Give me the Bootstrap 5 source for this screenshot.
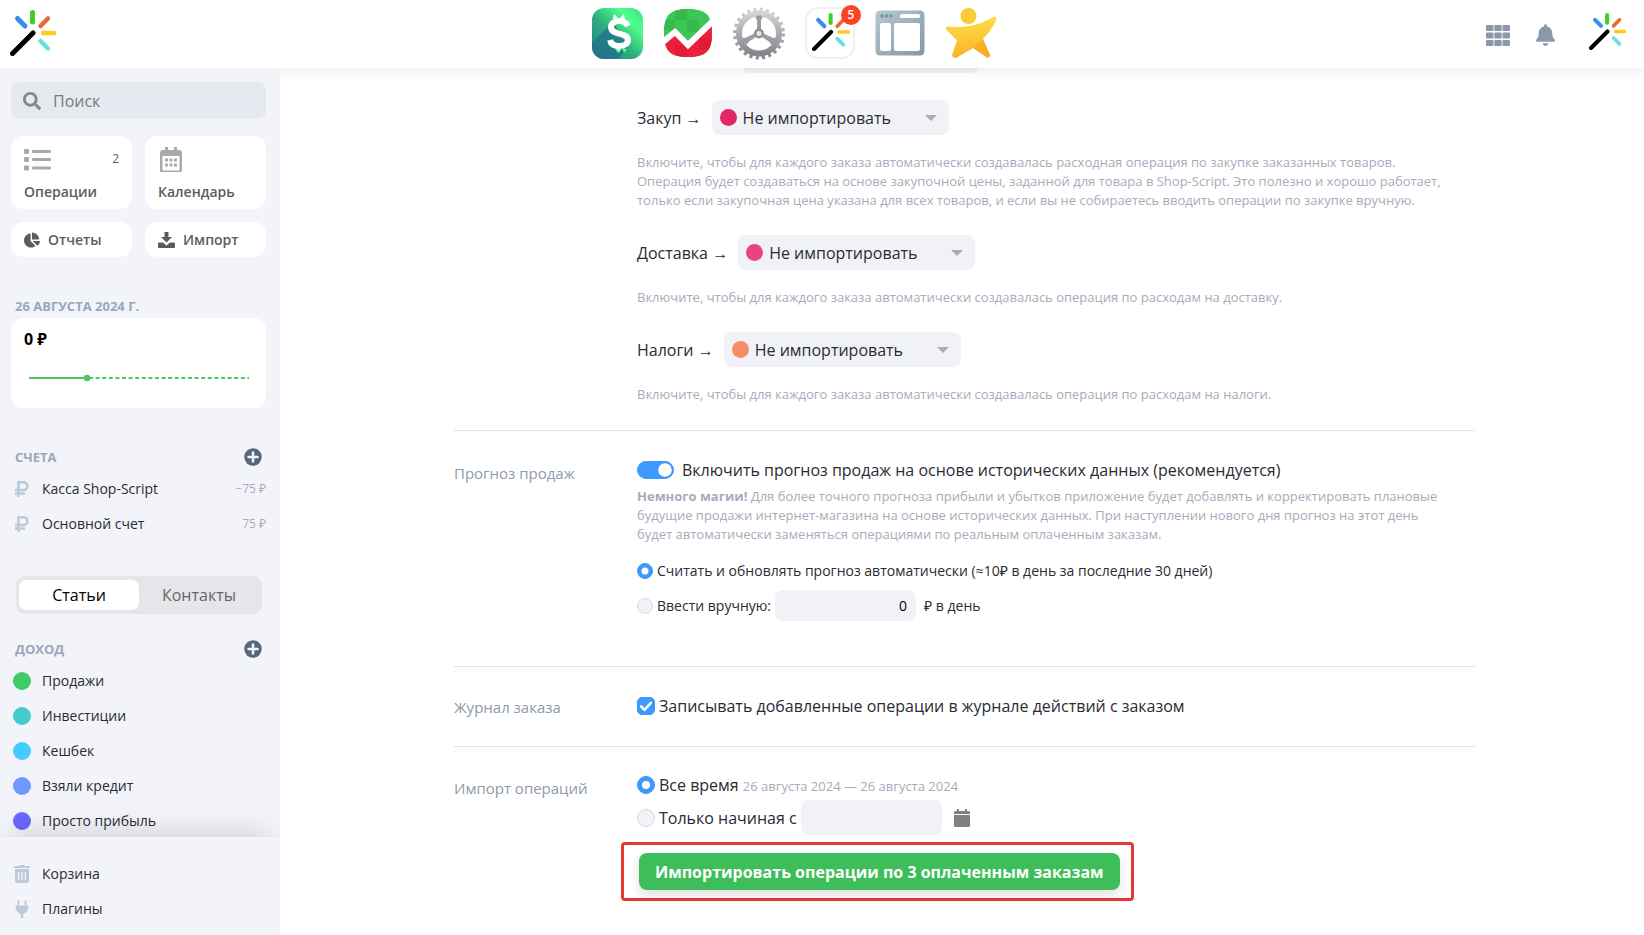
<!DOCTYPE html>
<html lang="ru">
<head>
<meta charset="utf-8">
<meta name="viewport" content="width=device-width, initial-scale=1">
<title>Импорт операций</title>
<link href="https://cdn.jsdelivr.net/npm/bootstrap@5.3.0/dist/css/bootstrap.min.css" rel="stylesheet">
<style>
  body { font-family: "Open Sans", "Noto Sans", sans-serif; font-size: 16px; line-height: 24px; color: #2b2b33; background: #fff; }
  a { color: inherit; text-decoration: none; }
  svg { flex: none; display: block; }

  .topbar { height: 68px; z-index: 10; padding-bottom: 2px; box-shadow: 0 0 16px rgba(0,0,0,.1); }
  .topbar-start { width: 105px; padding-left: 6px; }
  .topbar-apps { gap: 20px; }
  .topbar-end { width: 160px; padding: 4px 0 0 2px; gap: 26px; color: #8999ab; }
  .app-badge { top: -2px; right: -6px; width: 20px; height: 20px; border-radius: 50%; background: #fa4524; color: #fff; font-size: 12px; font-weight: 600; line-height: 20px; text-align: center; }

  .side { width: 280px; height: calc(100vh - 68px); top: 68px; background: #f3f4fa; font-size: 14px; }
  .side-scroll { padding: 14px 14px 0 11px; }
  .side-search { height: 37px; gap: 12px; border-radius: 8px; background: #e6e9f0; padding: 0 12px; color: #888; }
  .side-search input { border: 0; background: none; outline: 0; font-size: 16px; color: #333; }
  .side-search input::placeholder { color: #777a80; }
  .tiles { display: grid; grid-template-columns: 1fr 1fr; gap: 13px; margin-top: 17px; color: #5c5c60; font-weight: 600; }
  .tile { background: #fff; border-radius: 12px; padding: 0 13px; }
  .tile-tall { height: 73px; padding-top: 10px; }
  .tile-short { height: 35px; }
  .tile-count { font-size: 12px; font-weight: 400; line-height: 24px; }
  .side-head { font-size: 13px; font-weight: 700; line-height: 20px; color: #99a7bb; text-transform: uppercase; padding: 0 5px 0 4px; margin: 0; }
  .balance { background: #fff; border-radius: 12px; height: 90px; padding: 9px 13px; color: #000; font-size: 16px; font-weight: 700; }
  .side-row { height: 35px; padding-left: 1px; }
  .side-row-icon { width: 20px; margin-right: 10px; color: #bccada; display: flex; justify-content: center; }
  .side-sum { font-size: 12px; color: #a9a9bb; }
  .dot { display: block; width: 18px; height: 18px; border-radius: 50%; }
  .segmented { height: 38px; margin: 35px 4px 0 5px; padding: 4px 3px; background: #e5e6ea; border-radius: 9px; }
  .segmented button { border: 0; background: none; border-radius: 7px; font-size: 16px; line-height: 20px; color: #666; flex: 1; }
  .segmented button.active { background: #fff; color: #000; }
  .side-foot { padding: 19px 14px 9px 11px; background: #f3f4fa; box-shadow: 0 -14px 28px -10px rgba(0,0,0,.14); clip-path: inset(-60px 0 0 0); }

  .settings { max-width: 1026px; padding: 0 0 32px 5px; }
  .section { border-bottom: 1px solid #e3e3e6; }
  .section:last-child { border-bottom: 0; }
  .section-name { width: 183px; flex: none; font-size: 15px; color: #8d9bab; padding-top: 3px; }
  .pick-line { gap: 10px; }
  .pick { width: 237px; height: 35px; }
  .pick select { width: 100%; height: 100%; border: 0; border-radius: 8px; background: #f1f2f7; appearance: none; padding: 0 40px 0 31px; font-size: 16px; color: #2b2b33; }
  .pick .dot { position: absolute; left: 8px; top: 9px; width: 17px; height: 17px; pointer-events: none; }
  .pick::after { content: ""; position: absolute; right: 12px; top: 15px; border: 6px solid transparent; border-top-color: #aaaabb; border-bottom: 0; }
  .pick-clipped { margin: -30px 0 27px 105px; }
  .hint { font-size: 13px; line-height: 19px; color: #aaaabb; margin: 0; max-width: 812px; }
  .pick-hint { margin: 18px 0 25px; }
  .form-check-input { margin: 0; border-color: #d9dae3; background-color: #f1f2f7; flex: none; }
  .form-check-input:checked { background-color: #3d99fd; border-color: #3d99fd; }
  .mark-md { width: 18px; height: 18px; }
  .mark-sm { width: 16px; height: 16px; }
  input[type=checkbox].mark-md { border-radius: 5px; }
  .form-check-input[type=checkbox].mark-md:checked { background-image: url("data:image/svg+xml,%3csvg xmlns='http://www.w3.org/2000/svg' viewBox='0 0 18 18'%3e%3cpath d='M3.500 9.500l3.800 3.800L14.500 5.500' fill='none' stroke='%23fff' stroke-width='2.800' stroke-linecap='round' stroke-linejoin='round'/%3e%3c/svg%3e"); }
  .form-switch .form-check-input { width: 37px; height: 18px; margin: 0; float: none; }
  .form-switch .form-check-input, .form-switch .form-check-input:checked { --bs-form-switch-bg: url("data:image/svg+xml,%3csvg xmlns='http://www.w3.org/2000/svg' viewBox='-4 -4 8 8'%3e%3ccircle r='3.4' fill='%23fff'/%3e%3c/svg%3e"); }
  .fill { border: 0; background: #f1f2f7; border-radius: 8px; width: 141px; height: 35px; padding: 0 9px; }
  .fill-sm { height: 31px; font-size: 14px; text-align: right; }
  .text-md { font-size: 14px; }
  .callout { border: 3px solid #e5392f; border-radius: 4px; padding: 8px 11px 8px 15px; margin: 7px 0 0 -16px; }
  .btn-import { height: 37px; border-radius: 8px; background: #3dbe5a; color: #fff; font-weight: 700; font-size: 16px; line-height: 24px; padding: 0 16px; border: 0; box-shadow: 0 5px 12px rgba(0,0,0,.13); }
  .btn-import:hover { background: #35ad50; color: #fff; }
</style>
</head>
<body>

<svg width="0" height="0" class="position-absolute" aria-hidden="true">
  <defs>
    <linearGradient id="gMoney" x1="0" y1="1" x2="1" y2="0"><stop offset="0" stop-color="#23788a"/><stop offset=".45" stop-color="#2fae81"/><stop offset=".75" stop-color="#4dff88"/><stop offset="1" stop-color="#3ddd83"/></linearGradient>
    <linearGradient id="gGear" x1="0" y1="0" x2="0" y2="1"><stop offset="0" stop-color="#d2d2d4"/><stop offset="1" stop-color="#85858c"/></linearGradient>
    <linearGradient id="gWin" x1="0" y1="0" x2="1" y2="1"><stop offset="0" stop-color="#b4cad2"/><stop offset="1" stop-color="#8497a5"/></linearGradient>
    <linearGradient id="gStar" x1="0" y1="0" x2="0" y2="1"><stop offset="0" stop-color="#fde047"/><stop offset="1" stop-color="#f9b22a"/></linearGradient>
    <clipPath id="cSquircle"><path d="M25 1C43 1 49 7 49 25S43 49 25 49 1 43 1 25 7 1 25 1z"/></clipPath>
    <clipPath id="cMoney"><rect width="51" height="51" rx="12"/></clipPath>
    <symbol id="wand" viewBox="0 0 46 46">
      <g fill="none" stroke-linecap="round" stroke-width="4">
        <path d="M2.500 43.500L23 23" stroke="#000" stroke-width="5"/>
        <path d="M22.500 2.500V12" stroke="#44cc28" stroke-width="5"/>
        <path d="M7.500 8.500L15 16" stroke="#348eee" stroke-width="5"/>
        <path d="M38 8.500L30.500 16" stroke="#e66c34" stroke-width="4.500"/>
        <path d="M33 23H44" stroke="#fbcc1e" stroke-width="4.500"/>
        <path d="M30.500 31L38 38.500" stroke="#69dfdc" stroke-width="4.500"/>
      </g>
    </symbol>
    <symbol id="plus" viewBox="0 0 18 18"><circle cx="9" cy="9" r="8.700" fill="#556677"/><path d="M9 4.500v9M4.500 9h9" stroke="#f3f4fa" stroke-width="2.600" stroke-linecap="round"/></symbol>
    <symbol id="rub" viewBox="0 0 14 16"><path d="M3.500 16V1.200h5a3.900 3.900 0 0 1 0 7.800H0M0 12.500h10" fill="none" stroke="currentColor" stroke-width="2.600"/></symbol>
  </defs>
</svg>

<header class="topbar bg-white sticky-top d-flex align-items-center">
  <div class="topbar-start"><a href="#" aria-label="Главная"><svg width="54" height="54" viewBox="-4 -4 54 54"><use href="#wand" width="46" height="46"/></svg></a></div>
  <nav class="topbar-apps flex-grow-1 d-flex justify-content-center align-items-center" aria-label="Приложения">
    <a href="#" aria-label="Деньги"><svg width="51" height="51" viewBox="0 0 51 51"><g clip-path="url(#cMoney)"><rect width="51" height="51" fill="url(#gMoney)"/><path d="M21 14L0 35v16h26l10-12z" fill="#23708a" opacity=".75"/></g><path d="M23 41l3-2 3 4-3 2zM30 40l5 1-3 4zM18 33l-2 4 5 3z" fill="#4dff88"/><path d="M36 18c-2-4-5-5-9-5-5 0-8 3-8 6 0 9 17 5 17 13 0 4-4 6-9 6-5 0-8-2-9-6" fill="none" stroke="#fff" stroke-width="6"/><path d="M21 11l1-5 4 4zM28 10l4-4 1 6zM26 38l-1 4h4z" fill="#fff"/></svg></a>
    <a href="#" aria-label="Задачи"><svg width="50" height="50" viewBox="0 0 50 50"><g clip-path="url(#cSquircle)"><rect width="50" height="50" fill="#3cc653"/><path d="M12 0h12v12H12zM24 12h12v12H24zM0 12h12v10H0z" fill="#32b04a" opacity=".6"/><path d="M0 36l12-10 13 14 24-22v32H0z" fill="#ee1f3a"/><path d="M12 38h12v12H12zM36 30h14v12H36z" fill="#d31a32" opacity=".6"/></g><path d="M0 34L12 24 25 37 50 13" fill="none" stroke="#fff" stroke-width="6"/></svg></a>
    <a href="#" aria-label="Настройки"><svg width="52" height="53" viewBox="0 0 52 52"><circle cx="26" cy="26" r="24.200" fill="none" stroke="url(#gGear)" stroke-width="3.500" stroke-dasharray="3 3.336"/><circle cx="26" cy="26" r="20" fill="none" stroke="url(#gGear)" stroke-width="6"/><g fill="none" stroke="#9b9ba1" stroke-width="4"><path d="M26 26V8M26 26L9 34M26 26l17 8" /></g><path d="M22 9q3 4 3 9h2q0-5 3-9zM9 30q6 2 10-1l2 2q-5 2-8 7zM43 30q-6 2-10-1l-2 2q5 2 8 7z" fill="#9b9ba1"/><circle cx="26" cy="26" r="5" fill="#8f8f96"/><circle cx="26" cy="26" r="2.500" fill="#e8e8ea"/></svg></a>
    <a href="#" class="position-relative" aria-label="Мастер"><svg width="50" height="52" viewBox="0 0 50 52"><rect x="1" y="1" width="48" height="50" rx="12" fill="#fff" stroke="#f0f0f0" stroke-width="2"/><use href="#wand" x="7" y="6" width="38" height="38"/></svg><span class="app-badge position-absolute">5</span></a>
    <a href="#" aria-label="Сайт"><svg width="50" height="50" viewBox="0 0 50 50"><rect x=".5" y="2.500" width="49" height="45" rx="4.500" fill="url(#gWin)"/><g fill="#fff"><rect x="25" y="6" width="20" height="4" rx="1.500"/><rect x="5" y="15" width="11" height="28" rx="2"/><rect x="19" y="15" width="26" height="28" rx="2"/></g><g fill="#7c909c"><circle cx="7" cy="8" r="1.700"/><circle cx="11.500" cy="8" r="1.700"/><circle cx="16" cy="8" r="1.700"/></g></svg></a>
    <a href="#" aria-label="Звезда"><svg width="52" height="52" viewBox="0 0 52 52"><circle cx="23.500" cy="9" r="8" fill="#fbca35"/><path d="M3 19.500q10 1 19 0 14-2 27-10 3 0 2 4-4 9-13 18.500l7 16q0 3-3 2.500L28 41 12 50.500q-5 1-5-2.500l5-14.500L1 22.500q-1-3 2-3z" fill="url(#gStar)"/><path d="M38 32l7 16q0 3-3 2.500L28 41z" fill="#f7a51d" opacity=".6"/></svg></a>
  </nav>
  <div class="topbar-end d-flex align-items-center">
    <a href="#" aria-label="Меню"><svg width="24" height="22" viewBox="0 0 24 22" fill="currentColor"><path d="M1 0h5.500q1 0 1 1v4q0 1-1 1H1q-1 0-1-1V1q0-1 1-1zM9.300 0h5.400q1 0 1 1v4q0 1-1 1H9.300q-1 0-1-1V1q0-1 1-1zM17.500 0H23q1 0 1 1v4q0 1-1 1h-5.500q-1 0-1-1V1q0-1 1-1zM1 7.500h5.500q1 0 1 1v4q0 1-1 1H1q-1 0-1-1v-4q0-1 1-1zM9.300 7.500h5.400q1 0 1 1v4q0 1-1 1H9.300q-1 0-1-1v-4q0-1 1-1zM17.500 7.500H23q1 0 1 1v4q0 1-1 1h-5.500q-1 0-1-1v-4q0-1 1-1zM1 15h5.500q1 0 1 1v4q0 1-1 1H1q-1 0-1-1v-4q0-1 1-1zM9.300 15h5.400q1 0 1 1v4q0 1-1 1H9.300q-1 0-1-1v-4q0-1 1-1zM17.500 15H23q1 0 1 1v4q0 1-1 1h-5.500q-1 0-1-1v-4q0-1 1-1z" transform="translate(0 1)"/></svg></a>
    <a href="#" aria-label="Уведомления"><svg width="19" height="22" viewBox="0 0 448 512" fill="currentColor"><path d="M224 512c35.320 0 63.970-28.650 63.970-64H160.030c0 35.350 28.650 64 63.970 64zm215.390-149.710c-19.320-20.760-55.470-51.990-55.470-154.290 0-77.700-54.480-139.900-127.940-155.160V32c0-17.670-14.320-32-31.980-32s-31.980 14.330-31.980 32v20.840C118.560 68.100 64.080 130.300 64.080 208c0 102.300-36.150 133.530-55.470 154.290-6 6.450-8.660 14.160-8.610 21.710.11 16.400 12.980 32 32.100 32h383.800c19.120 0 32-15.600 32.100-32 .05-7.550-2.610-15.270-8.610-21.710z"/></svg></a>
    <a href="#" aria-label="Профиль"><svg width="46" height="46" viewBox="-8 -1 46 46"><use href="#wand" width="37" height="37"/></svg></a>
  </div>
</header>

<div class="d-flex align-items-start">
  <aside class="side sticky-top d-flex flex-column flex-shrink-0">
    <div class="side-scroll flex-grow-1 overflow-hidden">
      <label class="side-search d-flex align-items-center">
        <svg width="18" height="18" viewBox="0 0 512 512" fill="currentColor"><path d="M505 442.700L405.300 343c-4.500-4.500-10.600-7-17-7H372c27.600-35.300 44-79.700 44-128C416 93.100 322.900 0 208 0S0 93.100 0 208s93.100 208 208 208c48.300 0 92.700-16.400 128-44v16.300c0 6.400 2.500 12.500 7 17l99.700 99.700c9.400 9.400 24.600 9.400 33.900 0l28.300-28.300c9.400-9.400 9.400-24.600.1-34zM208 336c-70.700 0-128-57.200-128-128 0-70.700 57.200-128 128-128 70.700 0 128 57.200 128 128 0 70.700-57.200 128-128 128z"/></svg>
        <input type="search" class="w-100 p-0" placeholder="Поиск" aria-label="Поиск">
      </label>

      <nav class="tiles" aria-label="Разделы">
        <a href="#" class="tile tile-tall">
          <span class="d-flex justify-content-between align-items-center mb-2"><svg width="27" height="26" viewBox="0 0 27 26" fill="#aaa"><path d="M1 3h3q1 0 1 1v3q0 1-1 1H1Q0 8 0 7V4q0-1 1-1zM1 11h3q1 0 1 1v3q0 1-1 1H1q-1 0-1-1v-3q0-1 1-1zM1 19.500h3q1 0 1 1v3q0 1-1 1H1q-1 0-1-1v-3q0-1 1-1zM9 4h17q1 0 1 1v1q0 1-1 1H9Q8 7 8 6V5q0-1 1-1zM9 12h17q1 0 1 1v1q0 1-1 1H9q-1 0-1-1v-1q0-1 1-1zM9 20.500h17q1 0 1 1v1q0 1-1 1H9q-1 0-1-1v-1q0-1 1-1z"/></svg><span class="tile-count">2</span></span>
          <span class="d-block">Операции</span>
        </a>
        <a href="#" class="tile tile-tall">
          <span class="d-block mb-2"><svg width="26" height="26" viewBox="0 0 26 26" fill="#aaa"><path fill-rule="evenodd" d="M7 1h3v3h6V1h3v3h2q3 0 3 3v17q0 3-3 3H5q-3 0-3-3V7q0-3 3-3h2zM4.500 10v13.500q0 1 1 1h15q1 0 1-1V10z"/><path d="M7 12.500h3v3H7zM11.500 12.500h3v3h-3zM16 12.500h3v3h-3zM7 17.500h3v3H7zM11.500 17.500h3v3h-3zM16 17.500h3v3h-3z"/></svg></span>
          <span class="d-block">Календарь</span>
        </a>
        <a href="#" class="tile tile-short d-flex align-items-center gap-2"><svg width="16" height="16" viewBox="0 0 544 512" fill="#5c5c60"><path d="M527.790 288H290.500l158.030 158.030c6.040 6.040 15.980 6.530 22.190.68 38.700-36.460 65.320-85.610 73.130-140.860 1.340-9.460-6.510-17.850-16.060-17.850zm-15.830-64.800C503.720 103.740 408.260 8.280 288.800.04 279.680-.59 272 7.100 272 16.240V240h223.770c9.140 0 16.820-7.680 16.190-16.800zM224 288V50.710c0-9.550-8.390-17.400-17.840-16.060C86.990 51.490-4.100 155.600.14 280.370 4.500 408.510 114.830 513.590 243.030 511.980c50.400-.63 96.970-16.870 135.260-44.030 7.900-5.600 8.420-17.230 1.570-24.080L224 288z"/></svg>Отчеты</a>
        <a href="#" class="tile tile-short d-flex align-items-center gap-2"><svg width="17" height="16" viewBox="0 0 17 16" fill="#5c5c60"><path d="M6.500 0h4v5h3.500L8.500 10.500 3 5h3.500z"/><path d="M1 10.500h4l3.500 3 3.500-3h4q1 0 1 1V15q0 1-1 1H1q-1 0-1-1v-3.500q0-1 1-1z"/></svg>Импорт</a>
      </nav>

      <h2 class="side-head" style="margin-top:39px">26 августа 2024 г.</h2>
      <div class="balance" style="margin-top:2px">
        <div>0 ₽</div>
        <svg width="100%" height="40" viewBox="0 0 229 40" class="mt-1"><path d="M5 23H63" stroke="#53c462" stroke-width="2"/><path d="M65 23H225" stroke="#53c462" stroke-width="2" stroke-dasharray="4 2.600"/><circle cx="63" cy="23" r="3.300" fill="#53c462"/></svg>
      </div>

      <div class="d-flex justify-content-between align-items-center pe-1" style="margin-top:39px"><h2 class="side-head">Счета</h2><a href="#" aria-label="Добавить счет"><svg width="18" height="18"><use href="#plus"/></svg></a></div>
      <ul class="list-unstyled mb-0 mt-1">
        <li><a href="#" class="side-row d-flex align-items-center"><span class="side-row-icon"><svg width="14" height="16"><use href="#rub"/></svg></span>Касса Shop-Script<span class="side-sum ms-auto">−75 ₽</span></a></li>
        <li><a href="#" class="side-row d-flex align-items-center"><span class="side-row-icon"><svg width="14" height="16"><use href="#rub"/></svg></span>Основной счет<span class="side-sum ms-auto">75 ₽</span></a></li>
      </ul>

      <div class="segmented d-flex"><button type="button" class="active">Статьи</button><button type="button">Контакты</button></div>

      <div class="d-flex justify-content-between align-items-center pe-1" style="margin-top:25px"><h2 class="side-head">Доход</h2><a href="#" aria-label="Добавить статью"><svg width="18" height="18"><use href="#plus"/></svg></a></div>
      <ul class="list-unstyled mb-0 mt-1">
        <li><a href="#" class="side-row d-flex align-items-center"><span class="side-row-icon"><i class="dot" style="background:#3ecc66"></i></span>Продажи</a></li>
        <li><a href="#" class="side-row d-flex align-items-center"><span class="side-row-icon"><i class="dot" style="background:#44cccc"></i></span>Инвестиции</a></li>
        <li><a href="#" class="side-row d-flex align-items-center"><span class="side-row-icon"><i class="dot" style="background:#44ccff"></i></span>Кешбек</a></li>
        <li><a href="#" class="side-row d-flex align-items-center"><span class="side-row-icon"><i class="dot" style="background:#7099ff"></i></span>Взяли кредит</a></li>
        <li><a href="#" class="side-row d-flex align-items-center"><span class="side-row-icon"><i class="dot" style="background:#6a66ff"></i></span>Просто прибыль</a></li>
      </ul>
    </div>
    <div class="side-foot position-relative">
      <a href="#" class="side-row d-flex align-items-center"><span class="side-row-icon"><svg width="16" height="18" viewBox="0 0 16 18" fill="currentColor"><path d="M5 1l1-1h4l1 1h5v2H0V1z"/><path fill-rule="evenodd" d="M1 4h14v12q0 2-2 2H3q-2 0-2-2zM4 7v8h1.300V7zM7.400 7v8h1.300V7zM10.700 7v8H12V7z"/></svg></span>Корзина</a>
      <a href="#" class="side-row d-flex align-items-center"><span class="side-row-icon"><svg width="14" height="18" viewBox="0 0 14 18" fill="currentColor"><path d="M2.500 1q1-1.500 2 0v4h-2zM9.500 1q1-1.500 2 0v4h-2zM.5 5.500h13v2H13q0 5-4.800 6.500V18H5.800v-4Q1 12.500 1 7.500H.5z"/></svg></span>Плагины</a>
    </div>
  </aside>

  <main class="flex-grow-1">
    <form class="settings mx-auto">
      <section class="section d-flex pb-1">
        <div class="section-name"></div>
        <div class="flex-grow-1">
          <div class="pick pick-clipped position-relative"><select aria-label="Продажи"><option></option></select></div>
          <div class="pick-line d-flex align-items-center"><label for="buy">Закуп →</label><div class="pick position-relative"><select id="buy"><option>Не импортировать</option></select><i class="dot" style="background:#e02864"></i></div></div>
          <p class="hint pick-hint">Включите, чтобы для каждого заказа автоматически создавалась расходная операция по закупке заказанных товаров. Операция будет создаваться на основе закупочной цены, заданной для товара в Shop-Script. Это полезно и хорошо работает, только если закупочная цена указана для всех товаров, и если вы не собираетесь вводить операции по закупке вручную.</p>
          <div class="pick-line d-flex align-items-center"><label for="ship">Доставка →</label><div class="pick position-relative"><select id="ship"><option>Не импортировать</option></select><i class="dot" style="background:#e6457d"></i></div></div>
          <p class="hint pick-hint">Включите, чтобы для каждого заказа автоматически создавалась операция по расходам на доставку.</p>
          <div class="pick-line d-flex align-items-center"><label for="tax">Налоги →</label><div class="pick position-relative"><select id="tax"><option>Не импортировать</option></select><i class="dot" style="background:#f88c66"></i></div></div>
          <p class="hint" style="margin:18px 0 22px">Включите, чтобы для каждого заказа автоматически создавалась операция по расходам на налоги.</p>
        </div>
      </section>

      <section class="section d-flex" style="padding:27px 0 45px">
        <div class="section-name">Прогноз продаж</div>
        <div class="flex-grow-1">
          <div class="form-switch d-flex align-items-center p-0"><input class="form-check-input" type="checkbox" role="switch" id="forecast" checked><label for="forecast" class="ms-2">Включить прогноз продаж на основе исторических данных (рекомендуется)</label></div>
          <p class="hint" style="margin-top:5px"><b>Немного магии!</b> Для более точного прогноза прибыли и убытков приложение будет добавлять и корректировать плановые будущие продажи интернет-магазина на основе исторических данных. При наступлении нового дня прогноз на этот день будет автоматически заменяться операциями по реальным оплаченным заказам.</p>
          <div class="d-flex align-items-center gap-1 text-md" style="margin-top:15px"><input class="form-check-input mark-sm" type="radio" name="calc" id="auto" checked><label for="auto">Считать и обновлять прогноз автоматически (≈10₽ в день за последние 30 дней)</label></div>
          <div class="d-flex align-items-center gap-1 text-md" style="margin-top:7px"><input class="form-check-input mark-sm" type="radio" name="calc" id="manual"><label for="manual">Ввести вручную:</label><input type="text" class="fill fill-sm" value="0" aria-label="Сумма в день"><span class="ms-1">₽ в день</span></div>
        </div>
      </section>

      <section class="section d-flex" style="padding:25px 0 27px">
        <div class="section-name">Журнал заказа</div>
        <div class="d-flex align-items-center gap-1"><input class="form-check-input mark-md" type="checkbox" id="log" checked><label for="log">Записывать добавленные операции в журнале действий с заказом</label></div>
      </section>

      <section class="section d-flex" style="padding-top:26px">
        <div class="section-name">Импорт операций</div>
        <div class="d-flex flex-column align-items-start">
          <div class="d-flex align-items-center gap-1"><input class="form-check-input mark-md" type="radio" name="range" id="all" checked><label for="all">Все время <span class="hint">26 августа 2024 — 26 августа 2024</span></label></div>
          <div class="d-flex align-items-center gap-1" style="margin-top:3px"><input class="form-check-input mark-md" type="radio" name="range" id="since"><label for="since">Только начиная с</label><input type="text" class="fill" aria-label="Дата начала"><svg width="16" height="18" viewBox="0 0 16 18" fill="#808080" class="ms-2"><path d="M3 0h2v2h6V0h2v2h1.500Q16 2 16 3.500V5H0V3.500Q0 2 1.500 2H3zM0 6h16v10.500q0 1.500-1.500 1.500h-13Q0 18 0 16.500z"/></svg></div>
          <div class="callout"><button type="button" class="btn btn-import">Импортировать операции по 3 оплаченным заказам</button></div>
        </div>
      </section>
    </form>
  </main>
</div>

<script src="https://cdn.jsdelivr.net/npm/bootstrap@5.3.0/dist/js/bootstrap.bundle.min.js"></script>
</body>
</html>
